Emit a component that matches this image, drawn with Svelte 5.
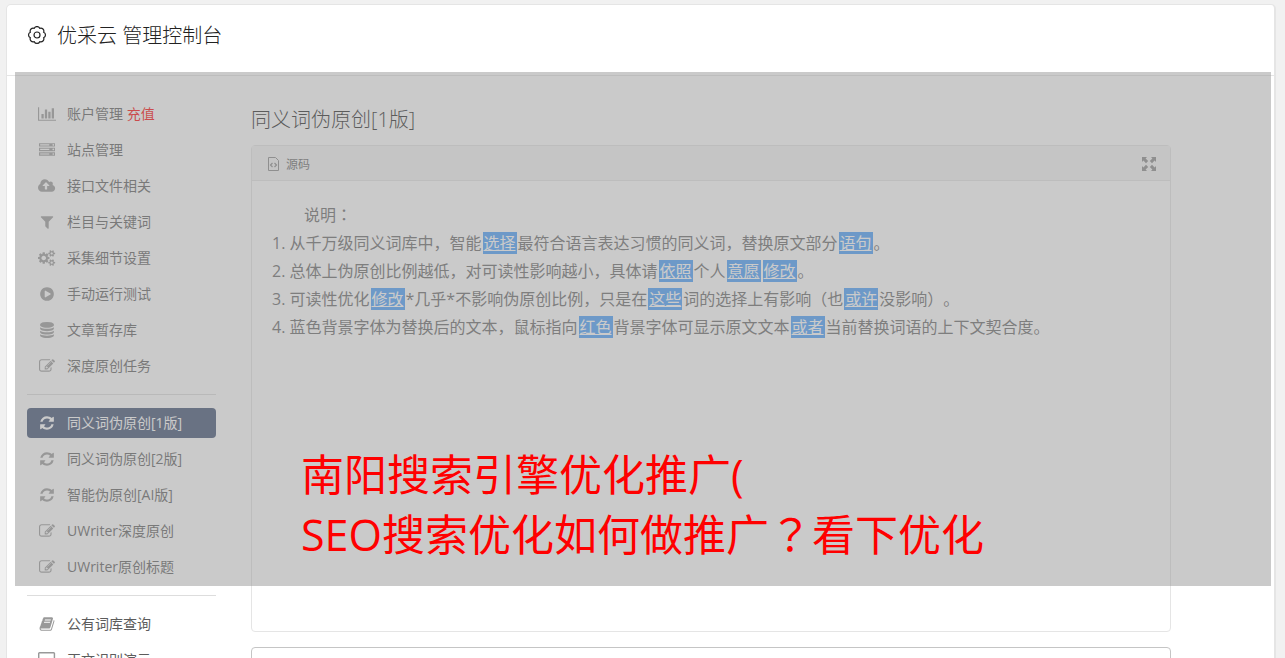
<script lang="ts">
  type Item = { label: string; icon: string; href: string; badge?: string; active?: boolean };

  // icon: [viewBox width, path], all drawn on a 1792 unit high grid
  const icons: Record<string, [number, string]> = {
    chart: [2048, 'M640 896v512h-256v-512h256zm384-512v1024h-256v-1024h256zm1024 1152v128h-2048v-1536h128v1408h1920zm-640-896v768h-256v-768h256zm384-384v1152h-256v-1152h256z'],
    server: [1792, 'M128 1408h1024v-128h-1024v128zm0-512h1024v-128h-1024v128zm1568 448q0-40-28-68t-68-28-68 28-28 68 28 68 68 28 68-28 28-68zm-1568-960h1024v-128h-1024v128zm1568 448q0-40-28-68t-68-28-68 28-28 68 28 68 68 28 68-28 28-68zm0-512q0-40-28-68t-68-28-68 28-28 68 28 68 68 28 68-28 28-68zm96 832v384h-1792v-384h1792zm0-512v384h-1792v-384h1792zm0-512v384h-1792v-384h1792z'],
    cloud: [1920, 'M1280 864q0-14-9-23l-352-352q-9-9-23-9t-23 9l-351 351q-10 12-10 24 0 14 9 23t23 9h224v352q0 13 9.500 22.500t22.500 9.500h192q13 0 22.500-9.500t9.500-22.500v-352h224q13 0 22.500-9.500t9.500-22.500zm640 288q0 159-112.500 271.500t-271.500 112.500h-1088q-185 0-316.500-131.500t-131.500-316.500q0-130 70-240t188-165q-2-30-2-43 0-212 150-362t362-150q156 0 285.500 87t188.500 231q71-62 166-62 106 0 181 75t75 181q0 76-41 138 130 31 213.500 135.500t83.500 238.500z'],
    filter: [1792, 'M1595 295q17 41-14 70l-493 493v742q0 42-39 59-13 5-25 5-27 0-45-19l-256-256q-19-19-19-45v-486l-493-493q-31-29-14-70 17-39 59-39h1280q42 0 59 39z'],
    cogs: [1920, 'M896 896q0-106-75-181t-181-75-181 75-75 181 75 181 181 75 181-75 75-181zm768 512q0-52-38-90t-90-38-90 38-38 90q0 53 37.500 90.500t90.500 37.500 90.500-37.500 37.500-90.500zm0-1024q0-52-38-90t-90-38-90 38-38 90q0 53 37.500 90.500t90.500 37.500 90.500-37.500 37.500-90.500zm-384 421v185q0 10-7 19.500t-16 10.500l-155 24q-11 35-32 76 34 48 90 115 7 11 7 20 0 12-7 19-23 30-82.500 89.500t-78.500 59.500q-11 0-21-7l-115-90q-37 19-77 31-11 108-23 155-7 24-30 24h-186q-11 0-20-7.500t-10-17.500l-23-153q-34-10-75-31l-118 89q-7 7-20 7-11 0-21-8-144-133-144-160 0-9 7-19 10-14 41-53t47-61q-23-44-35-82l-152-24q-10-1-17-9.500t-7-19.500v-185q0-10 7-19.500t16-10.500l155-24q11-35 32-76-34-48-90-115-7-11-7-20 0-12 7-20 22-30 82-89t79-59q11 0 21 7l115 90q34-18 77-32 11-108 23-154 7-24 30-24h186q11 0 20 7.500t10 17.500l23 153q34 10 75 31l118-89q8-7 20-7 11 0 21 8 144 133 144 160 0 8-7 19-12 16-42 54t-45 60q23 48 34 82l152 23q10 2 17 10.500t7 19.500zm640 533v140q0 16-149 31-12 27-30 52 51 113 51 138 0 4-4 7-122 71-124 71-8 0-46-47t-52-68q-20 2-30 2t-30-2q-14 21-52 68t-46 47q-2 0-124-71-4-3-4-7 0-25 51-138-18-25-30-52-149-15-149-31v-140q0-16 149-31 13-29 30-52-51-113-51-138 0-4 4-7 4-2 35-20t59-34 30-16q8 0 46 46.500t52 67.500q20-2 30-2t30 2q51-71 92-112l6-2q4 0 124 70 4 3 4 7 0 25-51 138 17 23 30 52 149 15 149 31zm0-1024v140q0 16-149 31-12 27-30 52 51 113 51 138 0 4-4 7-122 71-124 71-8 0-46-47t-52-68q-20 2-30 2t-30-2q-14 21-52 68t-46 47q-2 0-124-71-4-3-4-7 0-25 51-138-18-25-30-52-149-15-149-31v-140q0-16 149-31 13-29 30-52-51-113-51-138 0-4 4-7 4-2 35-20t59-34 30-16q8 0 46 46.500t52 67.500q20-2 30-2t30 2q51-71 92-112l6-2q4 0 124 70 4 3 4 7 0 25-51 138 17 23 30 52 149 15 149 31z'],
    play: [1792, 'M896 128q209 0 385.500 103t279.500 279.500 103 385.500-103 385.500-279.500 279.500-385.500 103-385.500-103-279.500-279.500-103-385.500 103-385.500 279.500-279.500 385.500-103zm384 823q32-18 32-55t-32-55l-544-320q-31-19-64-1-32 19-32 56v640q0 37 32 56 16 8 32 8 17 0 32-9z'],
    database: [1792, 'M896 768q237 0 443-43t325-127v170q0 69-103 128t-280 93.500-385 34.500-385-34.500-280-93.500-103-128v-170q119 84 325 127t443 43zm0 768q237 0 443-43t325-127v170q0 69-103 128t-280 93.500-385 34.500-385-34.500-280-93.500-103-128v-170q119 84 325 127t443 43zm0-384q237 0 443-43t325-127v170q0 69-103 128t-280 93.500-385 34.500-385-34.500-280-93.500-103-128v-170q119 84 325 127t443 43zm0-1152q208 0 385 34.500t280 93.500 103 128v128q0 69-103 128t-280 93.500-385 34.500-385-34.500-280-93.500-103-128v-128q0-69 103-128t280-93.500 385-34.500z'],
    edit: [1792, 'M888 1184l116-116-152-152-116 116v56h96v96h56zm440-720q-16-16-33 1l-350 350q-17 17-1 33t33-1l350-350q17-17 1-33zm80 594v190q0 119-84.500 203.500t-203.500 84.500h-832q-119 0-203.500-84.500t-84.500-203.500v-832q0-119 84.500-203.500t203.500-84.500h832q63 0 117 25 15 7 18 23 3 17-9 29l-49 49q-14 14-32 8-23-6-45-6h-832q-66 0-113 47t-47 113v832q0 66 47 113t113 47h832q66 0 113-47t47-113v-126q0-13 9-22l64-64q15-15 35-7t20 29zm-96-738l288 288-672 672h-288v-288zm444 132l-92 92-288-288 92-92q28-28 68-28t68 28l152 152q28 28 28 68t-28 68z'],
    refresh: [1792, 'M1639 1056q0 5-1 7-64 268-268 434.500t-478 166.500q-146 0-282.500-55t-243.500-157l-129 129q-19 19-45 19t-45-19-19-45v-448q0-26 19-45t45-19h448q26 0 45 19t19 45-19 45l-137 137q71 66 161 102t187 36q134 0 250-65t186-179q11-17 53-117 8-23 30-23h192q13 0 22.500 9.500t9.500 22.500zm25-800v448q0 26-19 45t-45 19h-448q-26 0-45-19t-19-45 19-45l138-138q-148-137-349-137-134 0-250 65t-186 179q-11 17-53 117-8 23-30 23h-199q-13 0-22.500-9.500t-9.500-22.500v-7q65-268 270-434.500t480-166.500q146 0 284 55.500t245 156.500l130-129q19-19 45-19t45 19 19 45z'],
    book: [1792, 'M1703 478q40 57 18 129l-275 906q-19 64-76.500 107.500t-122.500 43.500h-923q-77 0-148.500-53.500t-99.500-131.500q-24-67-2-127 0-4 3-27t4-37q1-8-3-21.500t-3-19.500q2-11 8-21t16.500-23.500 16.500-23.500q23-38 45-91.500t30-91.500q3-10 .5-30t-.5-28q3-11 17-28t17-23q21-36 42-92t25-90q1-9-2.500-32t.5-28q4-13 22-30.500t22-22.500q19-26 42.500-84.500t27.500-96.500q1-8-3-25.500t-2-26.500q2-8 9-18t18-23 17-21q8-12 16.500-30.500t15-35 16-36 19.500-32 26.500-23.500 36-11.500 47.500 5.500l-1 3q38-9 51-9h761q74 0 114 56t18 130l-274 906q-36 119-71.500 153.500t-128.500 34.500h-869q-27 0-38 15-11 16-1 43 24 70 144 70h923q29 0 56-15.500t35-41.500l300-987q7-22 5-57 38 15 59 43zm-1064 2q-4 13 2 22.500t20 9.500h608q13 0 25.500-9.500t16.500-22.500l21-64q4-13-2-22.500t-20-9.500h-608q-13 0-25.500 9.500t-16.500 22.500zm-83 256q-4 13 2 22.500t20 9.500h608q13 0 25.500-9.500t16.500-22.500l21-64q4-13-2-22.500t-20-9.500h-608q-13 0-25.500 9.500t-16.500 22.500z'],
    desktop: [1920, 'M160 0h1600q66 0 113 47t47 113v1088q0 66-47 113t-113 47h-544v192h192v128h-896v-128h192v-192h-544q-66 0-113-47t-47-113v-1088q0-66 47-113t113-47zm0 160v1088h1600v-1088z'],
  };

  const groups: Item[][] = [
    [
      { label: '账户管理', icon: 'chart', href: '#account', badge: '充值' },
      { label: '站点管理', icon: 'server', href: '#sites' },
      { label: '接口文件相关', icon: 'cloud', href: '#api' },
      { label: '栏目与关键词', icon: 'filter', href: '#keywords' },
      { label: '采集细节设置', icon: 'cogs', href: '#collect' },
      { label: '手动运行测试', icon: 'play', href: '#run' },
      { label: '文章暂存库', icon: 'database', href: '#articles' },
      { label: '深度原创任务', icon: 'edit', href: '#tasks' },
    ],
    [
      { label: '同义词伪原创[1版]', icon: 'refresh', href: '#syn1', active: true },
      { label: '同义词伪原创[2版]', icon: 'refresh', href: '#syn2' },
      { label: '智能伪原创[AI版]', icon: 'refresh', href: '#ai' },
      { label: 'UWriter深度原创', icon: 'edit', href: '#uwriter' },
      { label: 'UWriter原创标题', icon: 'edit', href: '#uwriter-title' },
    ],
    [
      { label: '公有词库查询', icon: 'book', href: '#words' },
      { label: '正文识别演示', icon: 'desktop', href: '#extract' },
    ],
  ];

  // words between braces are the replaced ones
  const lines = [
    '从千万级同义词库中，智能{选择}最符合语言表达习惯的同义词，替换原文部分{语句}。',
    '总体上伪原创比例越低，对可读性影响越小，具体请{依照}个人{意愿}{修改}。',
    '可读性优化{修改}*几乎*不影响伪原创比例，只是在{这些}词的选择上有影响（也{或许}没影响）。',
    '蓝色背景字体为替换后的文本，鼠标指向{红色}背景字体可显示原文文本{或者}当前替换词语的上下文契合度。',
  ].map((line) => line.split(/[{}]/));
</script>

<div class="page">
  <div class="card">
    <header class="topbar">
      <svg viewBox="0 0 20 20" width="20" height="20" fill="none" stroke="currentColor">
        <path d="M16.650 6.240A3 3 0 0 1 16.650 11.760A3 3 0 0 1 12.760 15.650A3 3 0 0 1 7.240 15.650A3 3 0 0 1 3.350 11.760A3 3 0 0 1 3.350 6.240A3 3 0 0 1 7.240 2.350A3 3 0 0 1 12.760 2.350A3 3 0 0 1 16.650 6.240Z" stroke-width="1.200" />
        <circle cx="10" cy="9" r="3" stroke-width="1.200" />
      </svg>
      <h1>优采云 管理控制台</h1>
    </header>

    <div class="content">
      <nav class="sidebar">
        {#each groups as group}
          <ul>
            {#each group as item}
              <li>
                <a href={item.href} class:active={item.active}>
                  <span class="icon">
                    <svg viewBox="0 0 {icons[item.icon][0]} 1792" height="16" fill="currentColor" fill-rule="evenodd">
                      <path d={icons[item.icon][1]} />
                    </svg>
                  </span>
                  <span class="label">{item.label}{#if item.badge}&nbsp;<em>{item.badge}</em>{/if}</span>
                </a>
              </li>
            {/each}
          </ul>
        {/each}
      </nav>

      <main>
        <h2>同义词伪原创[1版]</h2>

        <section class="editor">
          <div class="toolbar">
            <button type="button">
              <svg viewBox="0 0 11 14" width="11" height="14" fill="none" stroke="currentColor">
                <path d="M.5.5H7.500L10.500 3.500V13.500H.5Z" />
                <path d="M4.500 6L2.500 8L4.500 10M6.500 6L8.500 8L6.500 10" stroke-width="1.200" />
              </svg>
              源码
            </button>
            <button type="button" aria-label="全屏">
              <svg viewBox="0 0 14 14" width="14" height="14" fill="currentColor">
                <path d="M0 0H5L3.600 1.400L6.200 4L4 6.200L1.400 3.600L0 5ZM14 0V5L12.600 3.600L10 6.200L7.800 4L10.400 1.400L9 0ZM0 14V9L1.400 10.400L4 7.800L6.200 10L3.600 12.600L5 14ZM14 14H9L10.400 12.600L7.800 10L10 7.800L12.600 10.400L14 9Z" />
              </svg>
            </button>
          </div>
          <div class="document">
            <p>说明<span class="centered">：</span></p>
            <ol>
              {#each lines as parts}
                <li>{#each parts as part, i}{#if i % 2}<mark>{part}</mark>{:else}{part}{/if}{/each}</li>
              {/each}
            </ol>
          </div>
        </section>

        <section class="result"></section>
      </main>
    </div>
  </div>

  <div class="overlay">
    <p>南阳搜索引擎优化推广(<br />SEO搜索优化如何做推广<span class="centered">？</span>看下优化</p>
  </div>
</div>

<style>
  :global(body) {
    background: #f1f1f1;
  }

  .page {
    position: relative;
    box-sizing: border-box;
    height: 100vh;
    padding: 4px 9px 0 6px;
    overflow: hidden;
    font-family: 'Open Sans', 'Noto Sans CJK SC', sans-serif;
    text-spacing-trim: space-all;
    color: #666;
  }

  h1, h2, p, ul, ol {
    margin: 0;
    padding: 0;
  }

  h1, h2 {
    font-size: 20px;
    font-weight: 300;
    line-height: 30px;
  }

  /* punctuation set in the middle of its square */
  .centered {
    font-family: 'Noto Sans CJK TC', sans-serif;
    line-height: 1;
  }

  .card {
    min-height: 100%;
    background: #fff;
    border: 1px solid #e5e5e5;
    border-right-width: 2px;
    border-radius: 5px;
  }

  .topbar {
    display: flex;
    align-items: center;
    gap: 10px;
    height: 62px;
    padding: 0 20px 8px;
    border-bottom: 1px solid #e5e5e5;
    color: #222;
  }

  .content {
    display: flex;
    gap: 35px;
    padding: 23px 20px 0;
  }

  .sidebar {
    flex: 0 0 189px;
    font-size: 14px;
  }

  ul {
    display: flex;
    flex-direction: column;
    gap: 6px;
    list-style: none;
  }

  ul + ul {
    margin-top: 13px;
    padding-top: 13px;
    border-top: 1px solid #ddd;
  }

  .sidebar a {
    display: flex;
    align-items: center;
    height: 30px;
    padding: 0 10px;
    border-radius: 4px;
    color: #5c5c5c;
    text-decoration: none;
  }

  .sidebar a.active {
    background: #3c4e70;
    color: #fff;
  }

  .icon {
    display: flex;
    justify-content: center;
    width: 20px;
    margin-right: 10px;
    color: #999;
  }

  .label {
    padding-bottom: 2px;
  }

  .active .icon {
    color: #fff;
  }

  em {
    font-style: normal;
    color: #f00;
  }

  main {
    flex: 1;
    max-width: 920px;
  }

  h2 {
    padding: 6px 0 10px;
    color: #222;
  }

  .editor {
    border: 1px solid #e5e5e5;
    border-radius: 4px;
  }

  .toolbar {
    display: flex;
    align-items: center;
    justify-content: space-between;
    box-sizing: border-box;
    height: 35px;
    padding: 2px 14px 0 16px;
    background: #f5f5f5;
    border-bottom: 1px solid #e5e5e5;
  }

  .toolbar button {
    display: flex;
    align-items: center;
    gap: 7px;
    padding: 0;
    border: 0;
    background: none;
    font: inherit;
    font-size: 12px;
    color: #666;
    cursor: pointer;
  }

  .toolbar svg {
    color: #888;
  }

  .document {
    min-height: 410px;
    padding: 20px;
    font-size: 16px;
    line-height: 28px;
  }

  .document p {
    text-indent: 2em;
  }

  ol {
    list-style: decimal inside;
  }

  mark {
    margin: 0 1px;
    padding: 0 1px;
    background: #449cfa;
    color: #fff;
    text-decoration: underline;
  }

  .result {
    height: 120px;
    margin-top: 15px;
    border: 1px solid #c5c5c5;
    border-radius: 4px;
  }

  /* translucent banner lying over the page */
  .overlay {
    position: absolute;
    top: 72px;
    left: 15px;
    right: 14px;
    display: flex;
    align-items: flex-end;
    box-sizing: border-box;
    height: 514px;
    padding: 0 0 21px 286px;
    background: rgba(150, 150, 150, 0.5);
    pointer-events: none;
  }

  .overlay p {
    font-size: 43px;
    line-height: 60px;
    color: #f00;
  }
</style>
